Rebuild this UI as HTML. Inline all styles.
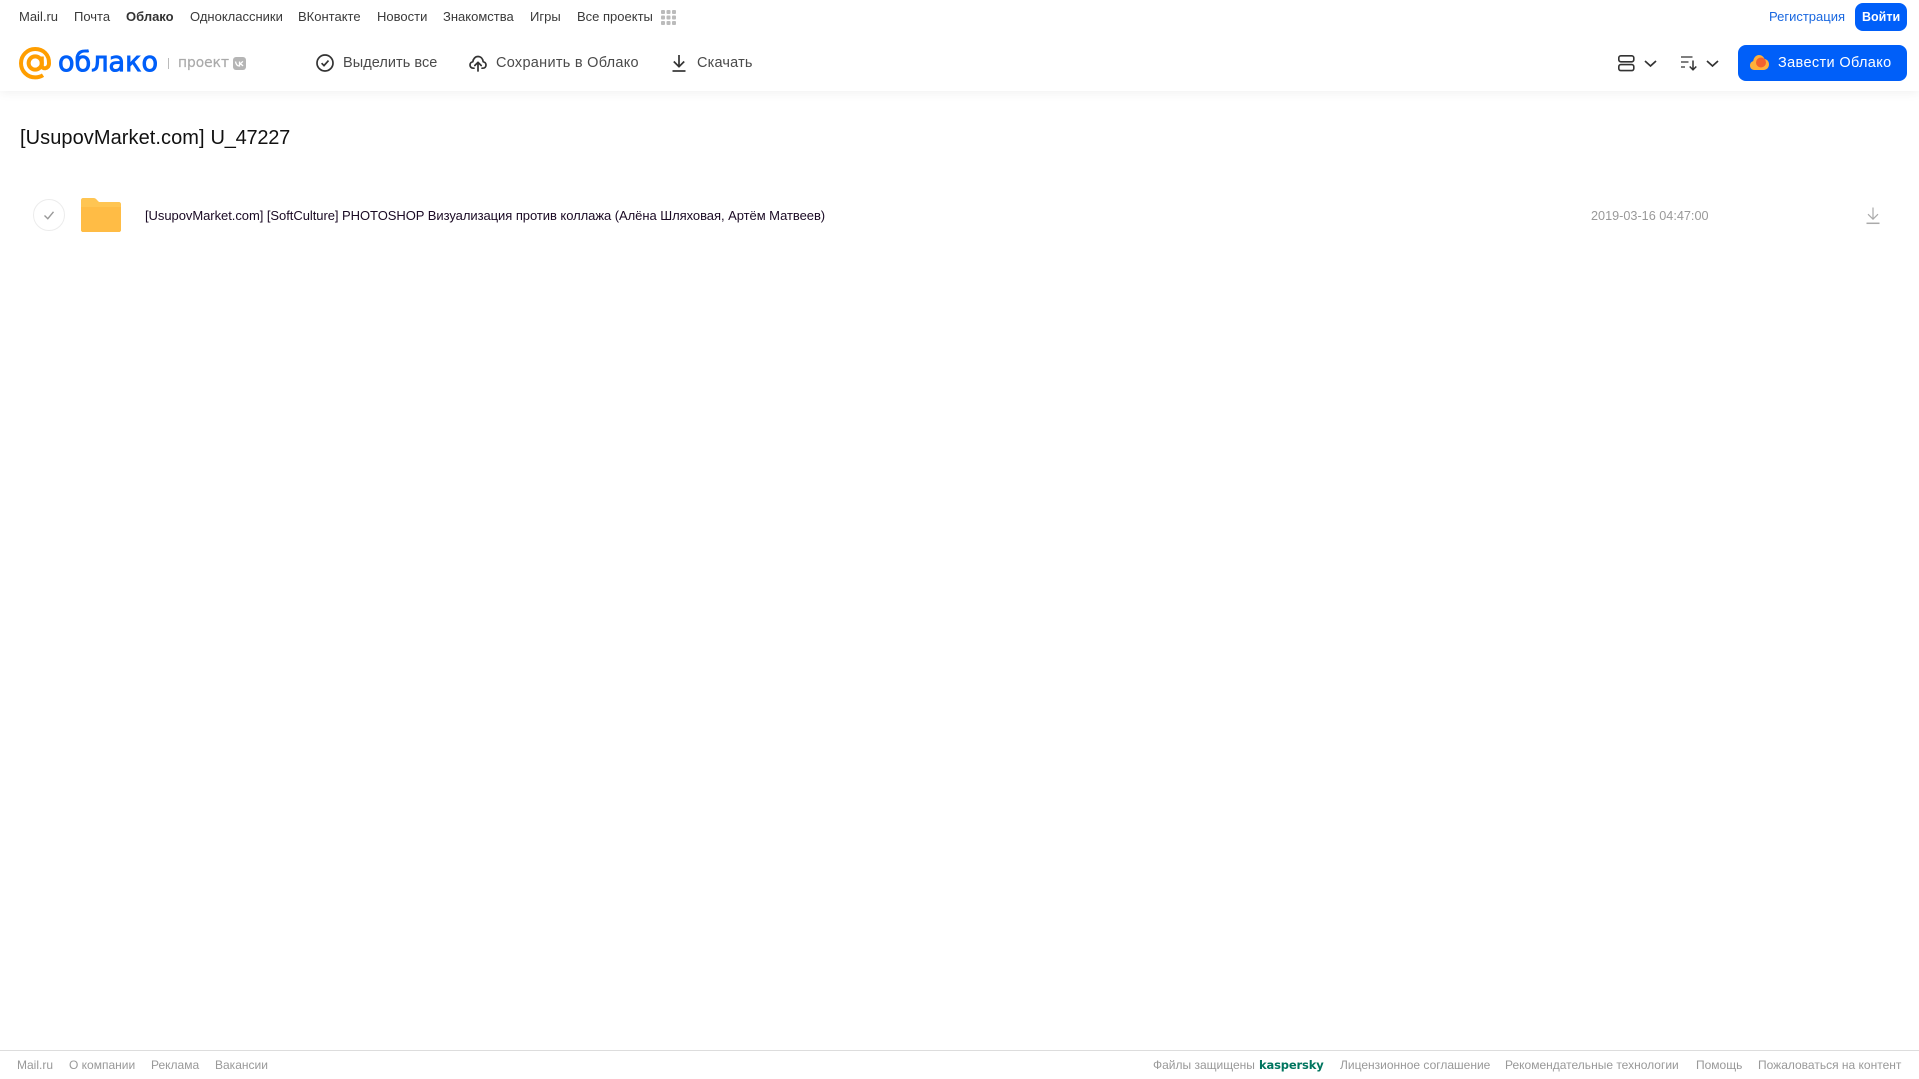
<!DOCTYPE html>
<html lang="ru">
<head>
<meta charset="utf-8">
<title>Облако</title>
<style>
html,body{margin:0;padding:0;background:#fff;}
body{width:1919px;height:1079px;position:relative;overflow:hidden;font-family:"Liberation Sans",sans-serif;}
.t{position:absolute;white-space:nowrap;line-height:16px;}
.n{top:9px;font-size:13px;color:#3a3a3a;}
.b{top:55px;font-size:14.5px;color:#4a4a4a;}
.f{top:1057px;font-size:12px;color:#999;}
svg{position:absolute;overflow:visible;}
#hdr{position:absolute;left:0;top:0;width:1919px;height:91px;background:#fff;box-shadow:0 2px 10px rgba(0,0,0,.06);}
#ftl{position:absolute;left:0;top:1050px;width:1919px;height:1px;background:#ddd;}
.btn{position:absolute;background:#005ff9;border-radius:8px;}
</style>
</head>
<body>
<div id="hdr"></div>

<span class="t n" style="left:19px">Mail.ru</span>
<span class="t n" style="left:74px">Почта</span>
<span class="t n" style="left:126px;font-weight:bold;color:#333">Облако</span>
<span class="t n" style="left:190px">Одноклассники</span>
<span class="t n" style="left:298px">ВКонтакте</span>
<span class="t n" style="left:377px">Новости</span>
<span class="t n" style="left:443px">Знакомства</span>
<span class="t n" style="left:530px">Игры</span>
<span class="t n" style="left:577px">Все проекты</span>
<svg style="left:661px;top:10px" width="15" height="15" fill="#bbb">
<rect x="0" y="0" width="4" height="4" rx="1"/><rect x="5.5" y="0" width="4" height="4" rx="1"/><rect x="11" y="0" width="4" height="4" rx="1"/>
<rect x="0" y="5.5" width="4" height="4" rx="1"/><rect x="5.5" y="5.5" width="4" height="4" rx="1"/><rect x="11" y="5.5" width="4" height="4" rx="1"/>
<rect x="0" y="11" width="4" height="4" rx="1"/><rect x="5.5" y="11" width="4" height="4" rx="1"/><rect x="11" y="11" width="4" height="4" rx="1"/>
</svg>

<span class="t n" style="left:1769px;color:#1a68e0">Регистрация</span>
<div class="btn" style="left:1855px;top:3px;width:52px;height:28px"></div>
<span class="t n" style="left:1862px;color:#fff;font-weight:bold;font-size:12.5px">Войти</span>

<!-- logo -->
<svg style="left:19px;top:47px" width="33" height="33" viewBox="0 0 33 33" fill="none" stroke="#ff9e00" stroke-width="4">
<circle cx="16.2" cy="16" r="6.6"/>
<path d="M22.8 9.5V18.5C22.8 22.5 29.8 22.5 30 16.5C30.4 7.5 24 2 16.2 2C8.4 2 2 8.3 2 16.2C2 24.2 8.4 30.4 16.2 30.4C19.4 30.4 21.8 29.6 24 28.2"/>
</svg>
<svg style="left:58px;top:44px" width="104" height="34">
<text x="0" y="27" font-family="DejaVu Sans" font-size="28" fill="#005ff9" stroke="#005ff9" stroke-width=".9" textLength="100" lengthAdjust="spacingAndGlyphs">облако</text>
</svg>
<div style="position:absolute;left:168px;top:58px;width:1px;height:11px;background:#bbb"></div>
<svg style="left:178px;top:50px" width="54" height="24">
<text x="0" y="17" font-family="DejaVu Sans" font-size="14" fill="#aaa" stroke="#aaa" stroke-width=".2" textLength="51" lengthAdjust="spacingAndGlyphs">проект</text>
</svg>
<div style="position:absolute;left:233px;top:57px;width:13px;height:13px;background:#b5b5b5;border-radius:3px"></div>
<svg style="left:233px;top:57px" width="13" height="13" fill="none" stroke="#fff" stroke-width="1.3"><path d="M2.5 4.5C3 7.5 4.5 9 6.5 9V4.5M6.5 6.7C8 6.5 9 5.5 9.8 4.3M6.5 6.7C8 7 9.3 8 10 9"/></svg>

<!-- toolbar -->
<svg style="left:316px;top:54px" width="18" height="18" fill="none" stroke="#333" stroke-width="1.7"><circle cx="9" cy="9" r="8"/><path d="M5.6 9.2L8 11.6L12.5 6.6"/></svg>
<span class="t b" style="left:343px;letter-spacing:.05px">Выделить все</span>
<svg style="left:469px;top:54px" width="18" height="18" fill="none" stroke="#333" stroke-width="1.7" stroke-linecap="round" stroke-linejoin="round"><path d="M5 14.2H4.2C2.2 14.2 1 12.7 1 11C1 9.3 2.2 8 3.8 7.8C4.2 4.7 6.3 2.5 9 2.5C11.8 2.5 13.8 4.7 14.2 7.8C15.8 8 17 9.3 17 11C17 12.7 15.8 14.2 13.8 14.2H13"/><path d="M9 17V8.5M5.8 11.5L9 8.3L12.2 11.5"/></svg>
<span class="t b" style="left:496px;letter-spacing:.28px">Сохранить в Облако</span>
<svg style="left:671px;top:54px" width="16" height="18" fill="none" stroke="#333" stroke-width="1.7"><path d="M8 1V12.5M2.8 7.5L8 12.7L13.2 7.5"/><path d="M1.5 17H14.5"/></svg>
<span class="t b" style="left:697px;letter-spacing:.18px">Скачать</span>

<svg style="left:1618px;top:55px" width="17" height="17" fill="none" stroke="#333" stroke-width="1.6"><rect x=".8" y=".8" width="15" height="6" rx="2"/><rect x=".8" y="9.6" width="15" height="6" rx="2"/></svg>
<svg style="left:1643.5px;top:60px" width="13" height="8" fill="none" stroke="#333" stroke-width="1.7"><path d="M1 1L6.5 6L12 1"/></svg>
<svg style="left:1681px;top:56px" width="16" height="15" fill="none" stroke="#333" stroke-width="1.3"><path d="M0 1H11.5M0 6H7.5M0 11H4"/><path d="M12 4.5V13.5M8.7 10.5L12 13.8L15.3 10.5" stroke-width="1.5"/></svg>
<svg style="left:1705.5px;top:60px" width="13" height="8" fill="none" stroke="#333" stroke-width="1.7"><path d="M1 1L6.5 6L12 1"/></svg>

<div class="btn" style="left:1738px;top:45px;width:169px;height:36px"></div>
<svg style="left:1750px;top:55px" width="19" height="15">
<path d="M0 10.5C0 8.3 1.3 6.6 3.2 6.1C3.8 2.6 6 0 9 0C11.5 0 13.5 1.5 14.6 4C17.2 4.4 19 6.5 19 9.3C19 12.6 16.8 15 13.5 15H4.5C1.8 15 0 13.2 0 10.5Z" fill="#ffb03a"/>
<circle cx="11" cy="7.5" r="5" fill="#f2622e"/>
</svg>
<span class="t b" style="left:1778px;color:#fff;letter-spacing:.36px">Завести Облако</span>

<!-- title -->
<span class="t" style="left:20px;top:126px;line-height:24px;font-size:20px;color:#111;letter-spacing:.07px">[UsupovMarket.com]</span>
<span class="t" style="left:210.5px;top:126px;line-height:24px;font-size:20px;color:#111;letter-spacing:-.23px">U_47227</span>

<!-- row -->
<svg style="left:33px;top:199px" width="32" height="32" fill="none"><circle cx="16" cy="16" r="15.5" stroke="#ececec"/><path d="M11.5 16.5L14.8 19.7L20.5 12.8" stroke="#999" stroke-width="1.4"/></svg>
<svg style="left:81px;top:198px" width="40" height="34">
<path d="M0 2C0 .9 .9 0 2 0H12.5C14 0 15 .7 16 2L18 4H38C39.1 4 40 4.9 40 6V32C40 33.1 39.1 34 38 34H2C.9 34 0 33.1 0 32Z" fill="#ffc552"/>
<path d="M0 9H40V32C40 33.1 39.1 34 38 34H2C.9 34 0 33.1 0 32Z" fill="#ffbc45"/>
</svg>
<span class="t" style="left:145px;top:208px;font-size:13px;color:#1a0a24;letter-spacing:-.05px">[UsupovMarket.com] [SoftCulture] PHOTOSHOP Визуализация против коллажа (Алёна Шляховая, Артём Матвеев)</span>
<span class="t" style="left:1591px;top:208px;font-size:12.66px;color:#999">2019-03-16 04:47:00</span>
<svg style="left:1866px;top:207px" width="14" height="18" fill="none" stroke="#aaa" stroke-width="1.2"><path d="M7 .5V12M2 7.2L7 12.2L12 7.2"/><path d="M.5 16.3H13.5" stroke-width="1.5"/></svg>

<!-- footer -->
<div id="ftl"></div>
<span class="t f" style="left:17px">Mail.ru</span>
<span class="t f" style="left:69px">О компании</span>
<span class="t f" style="left:151px">Реклама</span>
<span class="t f" style="left:215px">Вакансии</span>
<span class="t f" style="left:1153px">Файлы защищены</span>
<span class="t f" style="left:1259px;color:#00755f;font-weight:bold;font-family:'DejaVu Sans',sans-serif;font-size:11.5px;letter-spacing:-.15px">kaspersky</span>
<span class="t f" style="left:1340px">Лицензионное соглашение</span>
<span class="t f" style="left:1505px">Рекомендательные технологии</span>
<span class="t f" style="left:1696px">Помощь</span>
<span class="t f" style="left:1758px">Пожаловаться на контент</span>
</body>
</html>
